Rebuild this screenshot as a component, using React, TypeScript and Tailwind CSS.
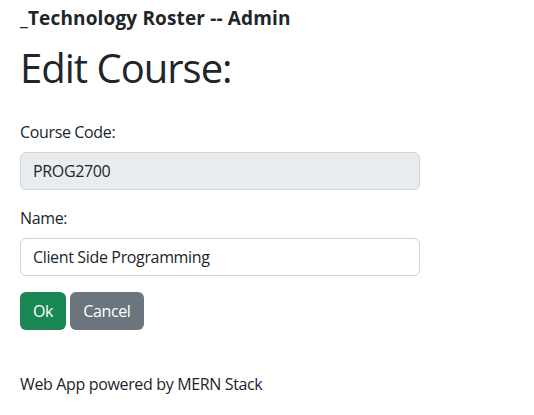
export default function App() {
  return (
    <div className="min-h-[415px] w-[534px] bg-white px-5 text-[#212529] tracking-[-0.35px]" style={{ fontFamily: '"Open Sans", "Noto Sans", sans-serif' }}>
      <div className="pt-[4px] text-[19px] font-bold leading-[28px] tracking-[0.15px]">_Technology Roster -- Admin</div>
      <h1 className="mt-[12px] text-[40px] font-normal leading-[48px] tracking-[-1px]">Edit Course:</h1>
      <form className="mt-[28px] w-[400px]">
        <label className="block text-[16px] leading-[24px]">Course Code:</label>
        <div className="mt-[8px] flex h-[38px] items-center rounded-[6px] border border-[#ced4da] bg-[#e9ecef] px-3 text-[16px]">PROG2700</div>
        <label className="mt-[16px] block text-[16px] leading-[24px]">Name:</label>
        <div className="mt-[8px] flex h-[38px] items-center rounded-[6px] border border-[#ced4da] bg-white px-3 text-[16px]">Client Side Programming</div>
        <div className="mt-[16px] flex gap-[4px]">
          <button type="button" className="h-[38px] rounded-[6px] bg-[#198754] px-[13px] text-[16px] text-white">Ok</button>
          <button type="button" className="h-[38px] rounded-[6px] bg-[#6c757d] px-[13px] text-[16px] text-white">Cancel</button>
        </div>
      </form>
      <div className="mt-[42px] text-[16px] leading-[24px]">Web App powered by MERN Stack</div>
    </div>
  );
}
